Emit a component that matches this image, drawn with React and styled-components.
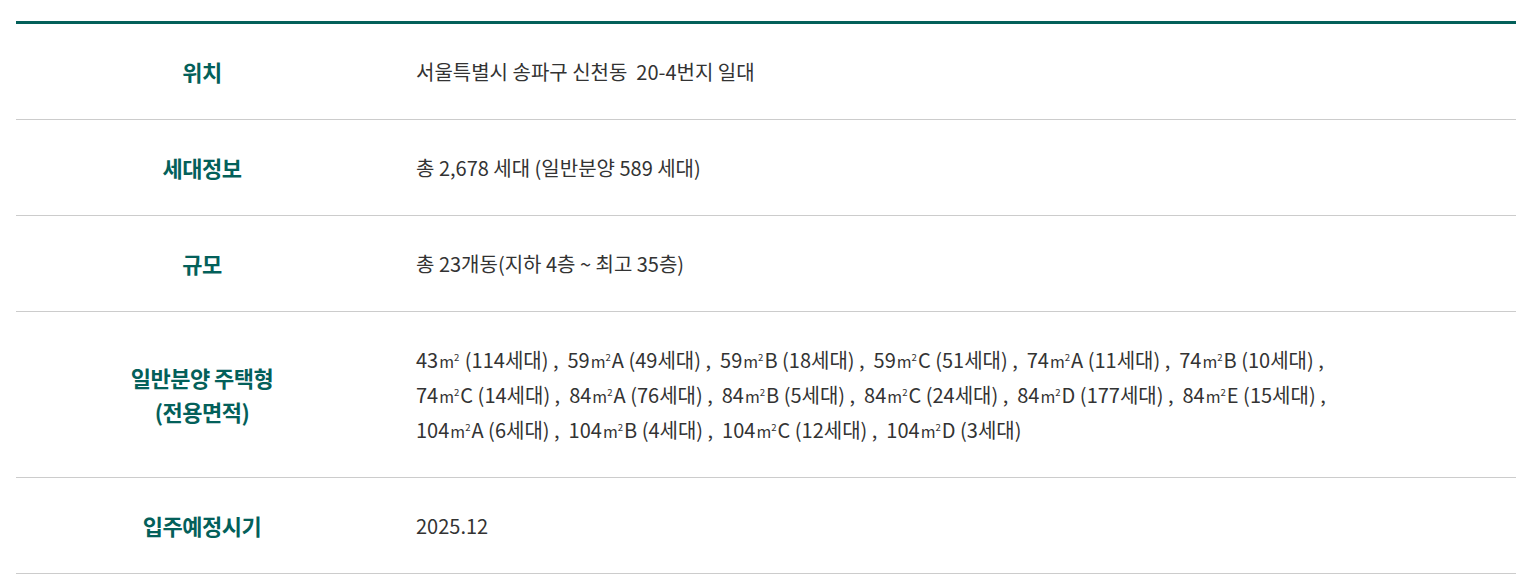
import React from 'react'
import styled, { createGlobalStyle } from 'styled-components'

const GlobalStyle = createGlobalStyle`
  html, body {
    margin: 0;
    padding: 0;
    background: #fff;
  }
  body {
    font-family: "Noto Sans CJK KR", "Noto Sans", sans-serif;
  }
`;

const Wrapper = styled.div`
  padding: 21px 22px 0 16px;
`;

const Table = styled.div`
  border-top: 3px solid #03605a;
`;

const Row = styled.div`
  display: flex;
  align-items: center;
  border-bottom: 1px solid #cccccc;
  padding: 30px 0;
`;

const Label = styled.div`
  width: 372px;
  flex-shrink: 0;
  text-align: center;
  font-size: 22px;
  font-weight: 700;
  line-height: 34px;
  color: #03605a;
  letter-spacing: -0.5px;
  margin-top: -2px;
`;

const Value = styled.div`
  flex: 1;
  padding-left: 28px;
  font-size: 20px;
  line-height: 35px;
  color: #333333;
`;

const Sqm = styled.span`
  font-size: 0.8em;
  line-height: 0;
  margin: 0 1px;
`;

const Sup = styled.span`
  font-size: 0.6em;
  line-height: 0;
  vertical-align: 0.7em;
`;

const areaLines = [
  [['43', '', 114], ['59', 'A', 49], ['59', 'B', 18], ['59', 'C', 51], ['74', 'A', 11], ['74', 'B', 10]],
  [['74', 'C', 14], ['84', 'A', 76], ['84', 'B', 5], ['84', 'C', 24], ['84', 'D', 177], ['84', 'E', 15]],
  [['104', 'A', 6], ['104', 'B', 4], ['104', 'C', 12], ['104', 'D', 3]],
];

function AreaList() {
  return areaLines.map((line, li) => (
    <React.Fragment key={li}>
      {li > 0 && <br />}
      {line.map(([size, type, count], i) => {
        const last = li === areaLines.length - 1 && i === line.length - 1;
        return (
          <React.Fragment key={i}>
            {size}
            <Sqm>m<Sup>2</Sup></Sqm>
            {type} ({count}세대)
            {!last && ' ,\u00a0 '}
          </React.Fragment>
        );
      })}
    </React.Fragment>
  ));
}

const rows = [
  { label: ['위치'], value: '서울특별시 송파구 신천동\u00a0 20-4번지 일대' },
  { label: ['세대정보'], value: '총 2,678 세대 (일반분양 589 세대)' },
  { label: ['규모'], value: '총 23개동(지하 4층 ~ 최고 35층)' },
  { label: ['일반분양 주택형', '(전용면적)'], value: <AreaList /> },
  { label: ['입주예정시기'], value: '2025.12' },
];

export default function App() {
  return (
    <>
      <GlobalStyle />
      <Wrapper>
        <Table>
          {rows.map((r) => (
            <Row key={r.label[0]}>
              <Label>
                {r.label.map((t, i) => (
                  <React.Fragment key={i}>
                    {i > 0 && <br />}
                    {t}
                  </React.Fragment>
                ))}
              </Label>
              <Value>{r.value}</Value>
            </Row>
          ))}
        </Table>
      </Wrapper>
    </>
  );
}
